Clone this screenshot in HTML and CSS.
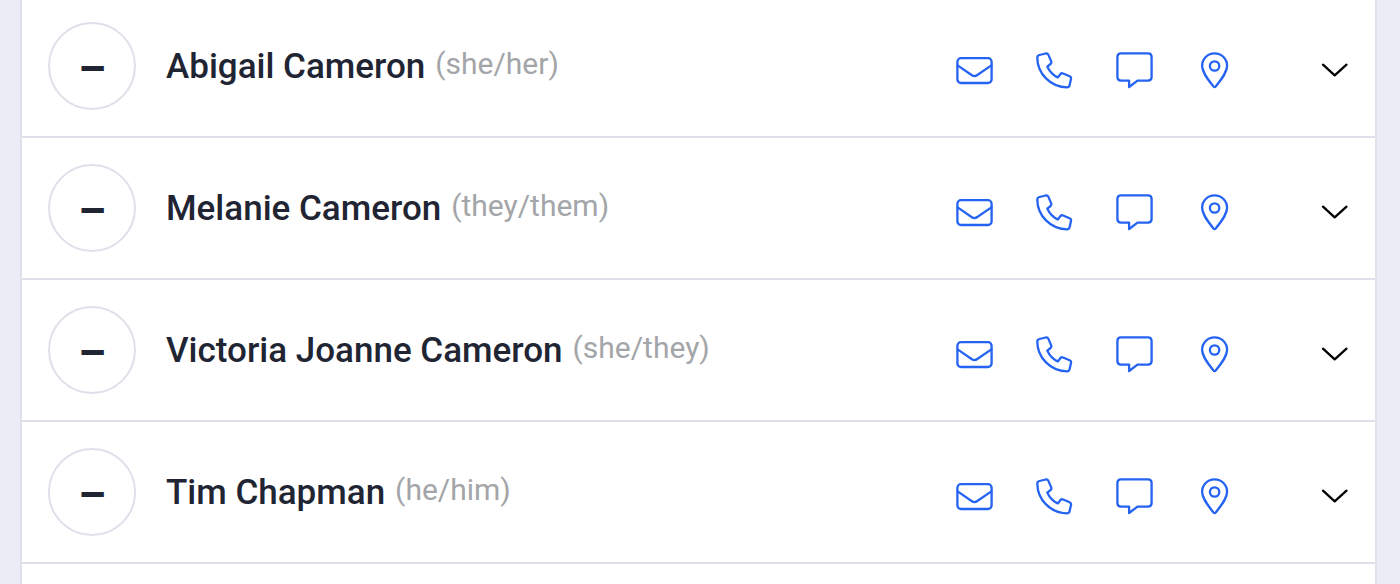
FILE: index.html
```html
<!DOCTYPE html>
<html lang="en">
<head>
    <meta charset="UTF-8">
    <meta name="viewport" content="width=device-width, initial-scale=1.0">
    <title>Contacts</title>
    <link rel="stylesheet" href="styles.css">
</head>
<body>
    <!-- shared icons -->
    <svg class="sprite" aria-hidden="true">
        <symbol id="mail" viewBox="0 0 40 40">
            <rect x="3.4" y="8.2" width="34.2" height="24.8" rx="3.6"/>
            <path d="M3.600 15.400l14.300 9.800q2.700 1.900 5.400-.2l14.100-9.600"/>
        </symbol>
        <symbol id="phone" viewBox="0 0 40 40">
            <path d="M5.500 5l6.200-1.500q1.900-.4 2.700 1.400l2.800 6.500q.6 1.500-.6 2.600l-3.300 2.700q3.700 7.600 10.500 10.700l2.700-3.300q1.100-1.300 2.600-.6l6.500 2.800q1.800.8 1.400 2.700l-1.500 6.600q-.4 1.700-2.200 1.700C16.500 37.300 3.300 23.500 3.300 7.400Q3.300 5.500 5.500 5z"/>
        </symbol>
        <symbol id="chat" viewBox="0 0 40 40">
            <path d="M7 3.400h27q3.600 0 3.600 3.600v20q0 3.600-3.600 3.600H23.500L15.100 37V30.600H7q-3.600 0-3.600-3.600v-20q0-3.600 3.600-3.600z"/>
        </symbol>
        <symbol id="pin" viewBox="0 0 40 40">
            <path d="M20.600 3.400c-7 0-12.500 5.600-12.500 12.400 0 5.800 4 11.600 11.400 20.700q1.100 1.200 2.200 0C29.100 27.400 33.100 21.600 33.100 15.800c0-6.800-5.500-12.400-12.500-12.400z"/>
            <circle cx="20.600" cy="16" r="4.700"/>
        </symbol>
        <symbol id="chevron" viewBox="0 0 40 40">
            <path d="M9 14.700l11.700 10.700 11.800-10.700"/>
        </symbol>
    </svg>

    <main class="contacts">
        <article class="contact">
            <div class="avatar">–</div>
            <h2 class="name">Abigail Cameron <span class="pronouns">(she/her)</span></h2>
            <div class="actions">
                <a href="#" aria-label="Email"><svg class="icon"><use href="#mail"/></svg></a>
                <a href="#" aria-label="Call"><svg class="icon"><use href="#phone"/></svg></a>
                <a href="#" aria-label="Message"><svg class="icon"><use href="#chat"/></svg></a>
                <a href="#" aria-label="Map"><svg class="icon"><use href="#pin"/></svg></a>
            </div>
            <button class="toggle" type="button" aria-label="Show details"><svg class="icon"><use href="#chevron"/></svg></button>
        </article>

        <article class="contact">
            <div class="avatar">–</div>
            <h2 class="name">Melanie Cameron <span class="pronouns">(they/them)</span></h2>
            <div class="actions">
                <a href="#" aria-label="Email"><svg class="icon"><use href="#mail"/></svg></a>
                <a href="#" aria-label="Call"><svg class="icon"><use href="#phone"/></svg></a>
                <a href="#" aria-label="Message"><svg class="icon"><use href="#chat"/></svg></a>
                <a href="#" aria-label="Map"><svg class="icon"><use href="#pin"/></svg></a>
            </div>
            <button class="toggle" type="button" aria-label="Show details"><svg class="icon"><use href="#chevron"/></svg></button>
        </article>

        <article class="contact">
            <div class="avatar">–</div>
            <h2 class="name">Victoria Joanne Cameron <span class="pronouns">(she/they)</span></h2>
            <div class="actions">
                <a href="#" aria-label="Email"><svg class="icon"><use href="#mail"/></svg></a>
                <a href="#" aria-label="Call"><svg class="icon"><use href="#phone"/></svg></a>
                <a href="#" aria-label="Message"><svg class="icon"><use href="#chat"/></svg></a>
                <a href="#" aria-label="Map"><svg class="icon"><use href="#pin"/></svg></a>
            </div>
            <button class="toggle" type="button" aria-label="Show details"><svg class="icon"><use href="#chevron"/></svg></button>
        </article>

        <article class="contact">
            <div class="avatar">–</div>
            <h2 class="name">Tim Chapman <span class="pronouns">(he/him)</span></h2>
            <div class="actions">
                <a href="#" aria-label="Email"><svg class="icon"><use href="#mail"/></svg></a>
                <a href="#" aria-label="Call"><svg class="icon"><use href="#phone"/></svg></a>
                <a href="#" aria-label="Message"><svg class="icon"><use href="#chat"/></svg></a>
                <a href="#" aria-label="Map"><svg class="icon"><use href="#pin"/></svg></a>
            </div>
            <button class="toggle" type="button" aria-label="Show details"><svg class="icon"><use href="#chevron"/></svg></button>
        </article>
    </main>
</body>
</html>
```
FILE: styles.css
```css
* {
    box-sizing: border-box;
}

body {
    margin: 0;
    background-color: #eaedf6;
    color: #212533;
    font-family: Roboto, sans-serif;
}

.sprite {
    display: none;
}

.contacts {
    min-height: 100vh;
    margin: 0 23px 0 20px;
    background-color: #fff;
    border: solid #dee0ea;
    border-width: 0 2px;
}

.contact {
    display: flex;
    align-items: flex-start;
    padding: 26px 21px 24px 26px;
    border-bottom: 2px solid #dee0ea;
}

.contact:first-child {
    padding-top: 22px;
}

.avatar {
    display: flex;
    flex: none;
    align-items: center;
    justify-content: center;
    width: 88px;
    height: 88px;
    padding-top: 6px;
    border: 2px solid #dee0ea;
    border-radius: 50%;
    font-size: 44px;
    font-weight: 700;
}

.name {
    display: flex;
    flex: 1;
    gap: 10px;
    margin: 0 0 0 30px;
    font-size: 35px;
    font-weight: 500;
    line-height: 90px;
}

.pronouns {
    color: #a3a5a8;
    font-size: 30px;
    font-weight: 400;
    line-height: 84px;
}

.actions {
    display: flex;
    gap: 40px;
    padding-top: 28px;
}

.icon {
    display: block;
    width: 40px;
    height: 40px;
    fill: none;
    stroke: currentColor;
    stroke-width: 2.3;
    stroke-linecap: round;
    stroke-linejoin: round;
}

.actions a {
    color: #2563f2;
}

.toggle {
    margin: 28px 0 0 80px;
    padding: 0;
    border: none;
    background: none;
    color: #000;
    cursor: pointer;
}
```
